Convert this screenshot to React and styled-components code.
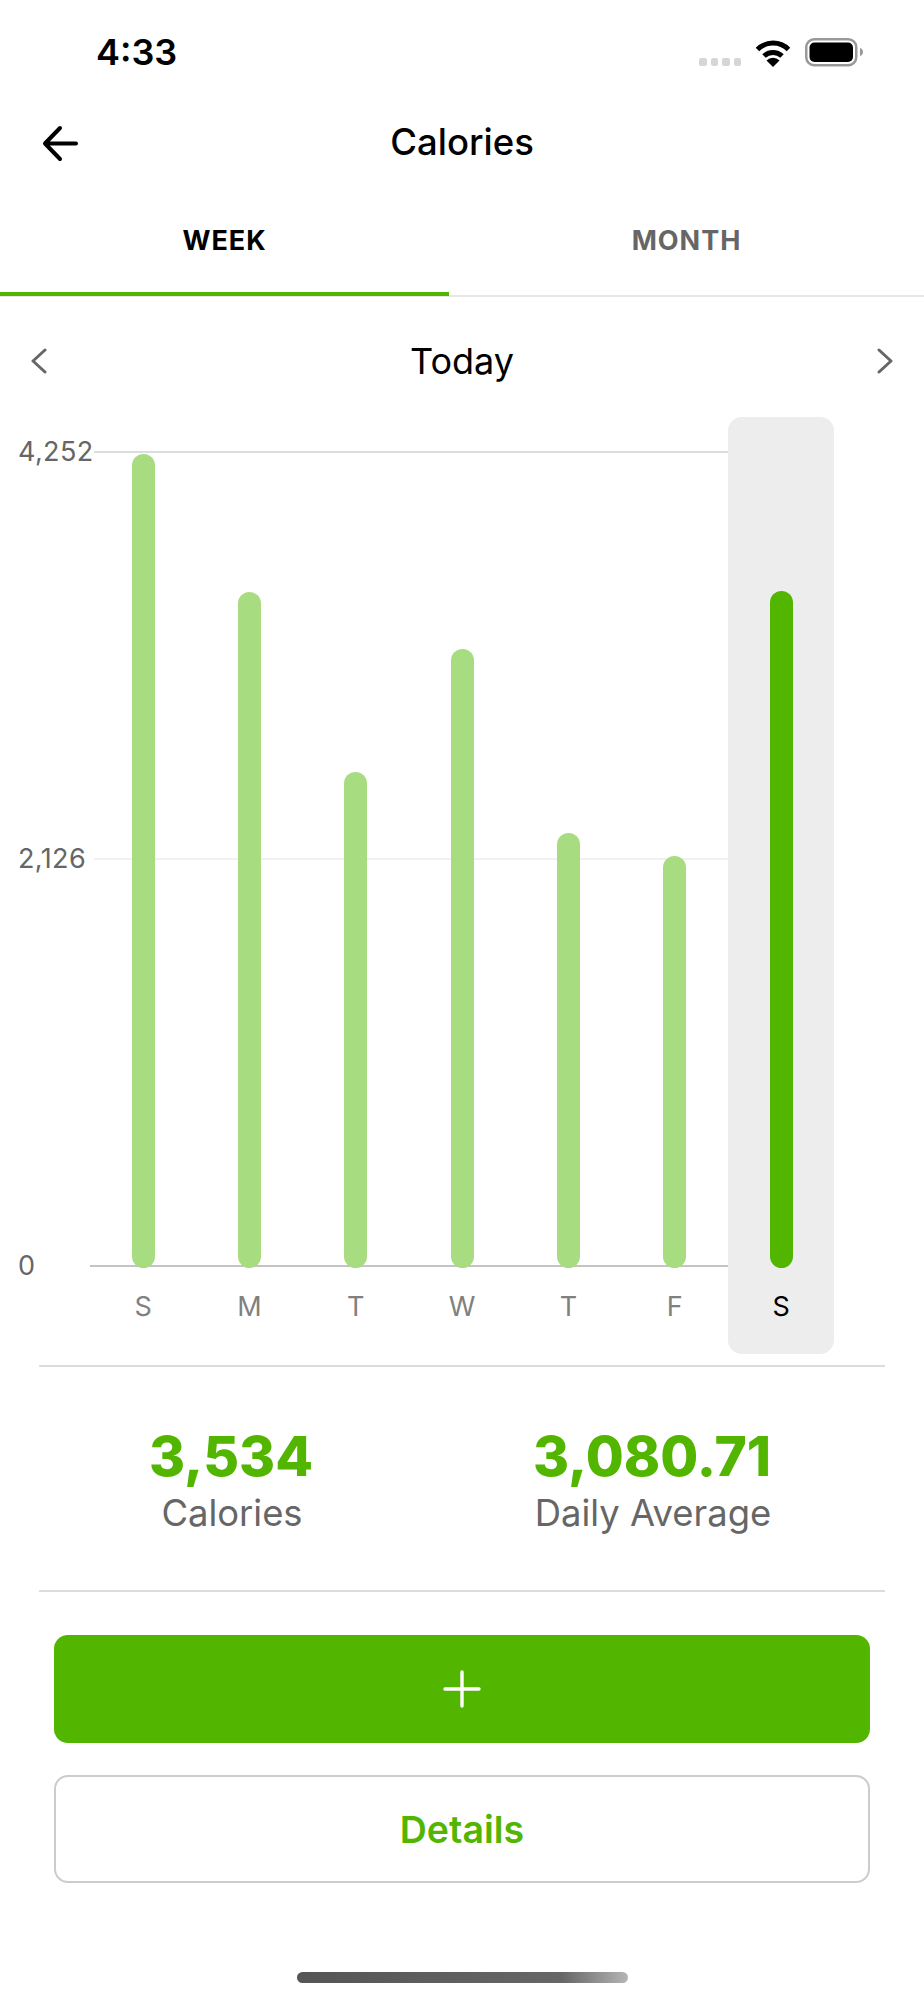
import React from 'react';
import styled, { createGlobalStyle } from 'styled-components';

const GREEN = '#52b600';

const GlobalStyle = createGlobalStyle`
  html, body { margin: 0; padding: 0; background: #fff; }
  * { box-sizing: border-box; }
  body { font-family: Inter, "Noto Sans", "Liberation Sans", sans-serif; }
`;

const Page = styled.div`
  width: 924px;
  height: 2000px;
  display: flex;
  flex-direction: column;
  overflow: hidden;
  background: #fff;
`;

const StatusBar = styled.div`
  height: 104px;
  padding: 32px 59px 0 96px;
  display: flex;
  justify-content: space-between;
  align-items: flex-start;
`;

const Time = styled.div`
  font-size: 36px;
  line-height: 40px;
  font-weight: 600;
  color: #000;
`;

const StatusIcons = styled.div`
  display: flex;
  align-items: flex-start;
  padding-top: 6px;
`;

const SignalDots = styled.div`
  display: flex;
  gap: 4px;
  margin: 20px 14px 0 0;
`;

const Dot = styled.span`
  width: 7.5px;
  height: 7.5px;
  border-radius: 2px;
  background: #d6d6d6;
`;

const WifiIcon = styled.svg`
  margin: 1px 14px 0 0;
`;

const NavBar = styled.div`
  height: 76px;
  padding: 0 41px;
  display: flex;
  align-items: center;
  justify-content: center;
  position: relative;
`;

const BackIcon = styled.svg`
  position: absolute;
  left: 41px;
  top: 21px;
`;

const Title = styled.h1`
  margin: 0;
  font-size: 36.5px;
  line-height: 44px;
  font-weight: 500;
  color: #000;
`;

const Tabs = styled.div`
  height: 117px;
  display: flex;
  border-bottom: 2px solid #e8e8e8;
`;

const Tab = styled.div`
  flex: ${(p) => (p.$active ? '0 0 449px' : '1')};
  height: 116px;
  display: flex;
  align-items: center;
  justify-content: center;
  padding-top: 8px;
  font-size: 27px;
  font-weight: 700;
  letter-spacing: 1px;
  color: ${(p) => (p.$active ? '#000' : '#666')};
  border-bottom: 4px solid ${(p) => (p.$active ? GREEN : 'transparent')};
`;

const DateRow = styled.div`
  height: 120px;
  padding: 8px 31px 0;
  display: flex;
  align-items: center;
  justify-content: space-between;
`;

const DateLabel = styled.div`
  font-size: 36px;
  line-height: 44px;
  color: #000;
`;

const Chart = styled.div`
  position: relative;
  height: 937px;
  padding-left: 90px;
  display: flex;
`;

const Tick = styled.div`
  position: absolute;
  left: 18px;
  width: 710px;
  display: flex;
  align-items: center;
  height: 40px;
  top: ${(p) => p.$top}px;
`;

const TickLabel = styled.span`
  font-size: 27px;
  line-height: 40px;
  letter-spacing: 0.4px;
  color: #666;
  width: ${(p) => (p.$line === 'base' ? '72px' : '76px')};
  flex: none;
`;

const TickLine = styled.span`
  flex: 1;
  height: ${(p) => (p.$line === 'base' ? '2px' : '1.5px')};
  background: ${(p) => (p.$line === 'base' ? '#c4c4c4' : p.$line === 'mid' ? '#f1f1f1' : '#dcdcdc')};
`;

const Column = styled.div`
  position: relative;
  width: 106.33px;
  height: 100%;
  display: flex;
  flex-direction: column;
  align-items: center;
  border-radius: 14px;
  background: ${(p) => (p.$selected ? '#ededed' : 'transparent')};
`;

const BarSlot = styled.div`
  height: 851px;
  display: flex;
  align-items: flex-end;
`;

const Bar = styled.div`
  width: 23px;
  border-radius: 11.5px;
  background: ${(p) => (p.$selected ? GREEN : '#a8dc80')};
`;

const DayLabel = styled.div`
  margin-top: 19px;
  font-size: 27px;
  line-height: 40px;
  color: ${(p) => (p.$selected ? '#000' : '#808080')};
`;

const Divider = styled.div`
  height: 2px;
  margin: 0 39px;
  background: #dcdcdc;
`;

const Stats = styled.div`
  height: 225px;
  margin: 11px 39px 0;
  display: grid;
  grid-template-columns: 384px 458px;
  border-top: 2px solid #dcdcdc;
`;

const Stat = styled.div`
  padding-top: 56px;
  display: flex;
  flex-direction: column;
  align-items: center;
`;

const StatValue = styled.div`
  font-size: 55px;
  line-height: 66px;
  font-weight: 800;
  color: ${GREEN};
`;

const StatLabel = styled.div`
  margin-top: 2px;
  padding-left: 2px;
  font-size: 36.4px;
  line-height: 44px;
  color: #666;
`;

const Actions = styled.div`
  padding: 43px 54px 0;
  display: flex;
  flex-direction: column;
  gap: 32px;
`;

const AddButton = styled.button`
  height: 108px;
  border: none;
  border-radius: 14px;
  background: ${GREEN};
  display: flex;
  align-items: center;
  justify-content: center;
  padding: 0;
`;

const DetailsButton = styled.button`
  height: 108px;
  border: 2px solid #cccccc;
  border-radius: 14px;
  background: #fff;
  font-family: inherit;
  font-size: 37.5px;
  font-weight: 600;
  color: ${GREEN};
`;

const HomeIndicator = styled.div`
  width: 331px;
  height: 11px;
  margin: 89px auto 0;
  border-radius: 6px;
  background: linear-gradient(90deg, #555 0%, #666 80%, #b5b5b5 100%);
`;

const Chevron = ({ flip }) => (
  <svg width="16" height="26" viewBox="0 0 16 26" fill="none">
    <path
      d={flip ? 'M2 2 L14 13 L2 24' : 'M14 2 L2 13 L14 24'}
      stroke="#666"
      strokeWidth="3"
      strokeLinecap="round"
      strokeLinejoin="round"
    />
  </svg>
);

const ticks = [
  { label: '4,252', top: 15, line: 'top' },
  { label: '2,126', top: 422, line: 'mid' },
  { label: '0', top: 829, line: 'base' },
];

const days = [
  { day: 'S', top: 454 },
  { day: 'M', top: 592 },
  { day: 'T', top: 772 },
  { day: 'W', top: 649 },
  { day: 'T', top: 833 },
  { day: 'F', top: 856 },
  { day: 'S', top: 591, selected: true },
];

export default function App() {
  return (
    <Page>
      <GlobalStyle />
      <StatusBar>
        <Time>4:33</Time>
        <StatusIcons>
          <SignalDots>
            <Dot /><Dot /><Dot /><Dot />
          </SignalDots>
          <WifiIcon width="36" height="28" viewBox="0 0 36 28" fill="none">
            <path d="M2.5 10.5 A 22 22 0 0 1 33.5 10.5" stroke="#000" strokeWidth="5" />
            <path d="M9 17 A 13 13 0 0 1 27 17" stroke="#000" strokeWidth="5" />
            <path d="M18 28 L11.5 21.5 A 9 9 0 0 1 24.5 21.5 Z" fill="#000" />
          </WifiIcon>
          <svg width="60" height="30" viewBox="0 0 60 30" fill="none">
            <rect x="1.25" y="1.25" width="50" height="26" rx="8" stroke="#999" strokeWidth="2.5" />
            <rect x="4.5" y="4.5" width="43.5" height="19.5" rx="5" fill="#000" />
            <path d="M55 10 C57.5 11 58 12.5 58 14 C58 15.5 57.5 17 55 18 Z" fill="#999" />
          </svg>
        </StatusIcons>
      </StatusBar>

      <NavBar>
        <BackIcon width="38" height="38" viewBox="0 0 38 38" fill="none">
          <path
            d="M19 3 L4 18.5 L19 34 M4 18.5 L35 18.5"
            stroke="#000"
            strokeWidth="4"
            strokeLinecap="round"
            strokeLinejoin="round"
          />
        </BackIcon>
        <Title>Calories</Title>
      </NavBar>

      <Tabs>
        <Tab $active>WEEK</Tab>
        <Tab>MONTH</Tab>
      </Tabs>

      <DateRow>
        <Chevron />
        <DateLabel>Today</DateLabel>
        <Chevron flip />
      </DateRow>

      <Chart>
        {ticks.map((t) => (
          <Tick key={t.label} $top={t.top}>
            <TickLabel $line={t.line}>{t.label}</TickLabel>
            <TickLine $line={t.line} />
          </Tick>
        ))}
        {days.map((d, i) => (
          <Column key={i} $selected={d.selected}>
            <BarSlot>
              <Bar $selected={d.selected} style={{ height: 1268 - d.top }} />
            </BarSlot>
            <DayLabel $selected={d.selected}>{d.day}</DayLabel>
          </Column>
        ))}
      </Chart>

      <Stats>
        <Stat>
          <StatValue>3,534</StatValue>
          <StatLabel>Calories</StatLabel>
        </Stat>
        <Stat>
          <StatValue>3,080.71</StatValue>
          <StatLabel>Daily Average</StatLabel>
        </Stat>
      </Stats>
      <Divider />

      <Actions>
        <AddButton aria-label="Add">
          <svg width="38" height="38" viewBox="0 0 38 38" fill="none">
            <path d="M19 2 L19 36 M2 19 L36 19" stroke="#fff" strokeWidth="3.4" strokeLinecap="round" />
          </svg>
        </AddButton>
        <DetailsButton>Details</DetailsButton>
      </Actions>

      <HomeIndicator />
    </Page>
  );
}
